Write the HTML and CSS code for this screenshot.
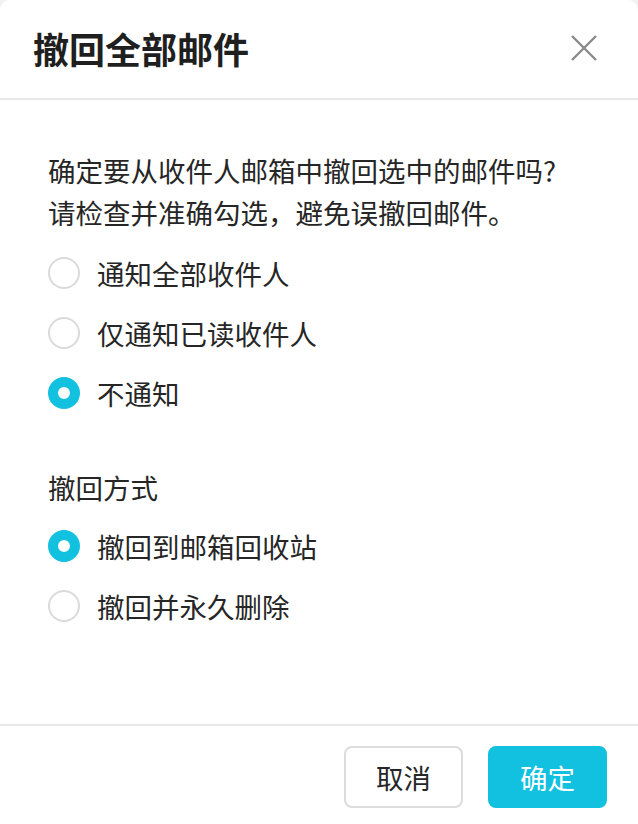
FILE: index.html
```html
<!DOCTYPE html>
<html lang="zh-CN">

<head>
    <meta charset="UTF-8">
    <meta name="viewport" content="width=device-width, initial-scale=1.0">
    <title>撤回全部邮件</title>
    <link rel="stylesheet" href="styles.css">
</head>

<body>

    <div class="dialog">
        <div class="dialog-header">
            <h3>撤回全部邮件</h3>
            <button class="close" aria-label="关闭">
                <svg width="26" height="26" viewBox="0 0 26 26">
                    <path d="M1 1 L25 25 M25 1 L1 25" stroke="#8a8a8a" stroke-width="2.4" fill="none" />
                </svg>
            </button>
        </div>

        <div class="dialog-body">
            <p class="desc">确定要从收件人邮箱中撤回选中的邮件吗?<br>请检查并准确勾选，避免误撤回邮件。</p>

            <div class="options">
                <label class="radio"><span class="dot"></span>通知全部收件人</label>
                <label class="radio"><span class="dot"></span>仅通知已读收件人</label>
                <label class="radio checked"><span class="dot"></span>不通知</label>
            </div>

            <p class="group-title">撤回方式</p>

            <div class="options">
                <label class="radio checked"><span class="dot"></span>撤回到邮箱回收站</label>
                <label class="radio"><span class="dot"></span>撤回并永久删除</label>
            </div>
        </div>

        <div class="dialog-footer">
            <button class="btn">取消</button>
            <button class="btn primary">确定</button>
        </div>
    </div>

</body>

</html>
```

FILE: styles.css
```css
*{
    margin: 0;
    box-sizing: border-box;
}
body{
    background: #f2f2f2;
    font-family: "Noto Sans CJK SC", "Noto Sans", sans-serif;
    color: #262626;
}
.dialog{
    width: 638px;
    height: 824px;
    background: white;
    border-radius: 10px 10px 0 0;
    display: flex;
    flex-direction: column;
}
.dialog-header{
    height: 100px;
    border-bottom: 2px solid #e8e8e8;
    display: flex;
    align-items: center;
    justify-content: space-between;
    padding: 0 41px 0 33px;
}
.dialog-header h3{
    font-size: 36px;
    font-weight: bold;
    color: #1f1f1f;
    margin-top: -3px;
}
.close{
    border: none;
    background: none;
    padding: 0;
    display: flex;
    margin-top: -2px;
}
.dialog-body{
    flex: 1;
    padding: 49px 48px 0;
    font-size: 27.5px;
}
.desc{
    line-height: 42px;
}
.options{
    margin-top: 10px;
    display: flex;
    flex-direction: column;
}
.radio{
    height: 60px;
    display: flex;
    align-items: center;
    gap: 17px;
}
.dot{
    width: 32px;
    height: 32px;
    border-radius: 50%;
    border: 2px solid #dadada;
    flex-shrink: 0;
}
.radio.checked .dot{
    border: 10px solid #12c1df;
    background: white;
}
.group-title{
    margin-top: 43px;
    line-height: 42px;
}
.group-title + .options{
    margin-top: 8px;
}
.dialog-footer{
    height: 100px;
    border-top: 2px solid #e8e8e8;
    display: flex;
    justify-content: flex-end;
    align-items: flex-start;
    gap: 25px;
    padding: 20px 31px 0 0;
}
.btn{
    width: 119px;
    height: 62px;
    border: 2px solid #dcdcdc;
    border-radius: 8px;
    background: white;
    font-family: inherit;
    font-size: 27.5px;
    color: #262626;
}
.btn.primary{
    background: #12c1df;
    border-color: #12c1df;
    color: white;
}
```
